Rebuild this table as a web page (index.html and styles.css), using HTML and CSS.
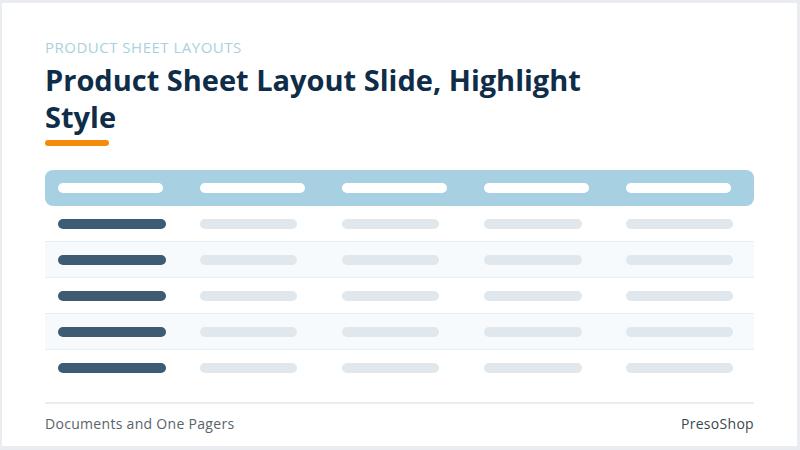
FILE: index.html
```html
<!DOCTYPE html>
<html>
<head>
<meta charset="utf-8">
<link rel="stylesheet" href="styles.css">
</head>
<body>
<div class="slide">
  <div class="eyebrow">PRODUCT SHEET LAYOUTS</div>
  <h1 class="title">Product Sheet Layout Slide, Highlight Style</h1>
  <div class="accent"></div>
  <div class="table">
    <div class="row head">
      <div class="cell"><span class="pill white w105"></span></div>
      <div class="cell"><span class="pill white w105"></span></div>
      <div class="cell"><span class="pill white w105"></span></div>
      <div class="cell"><span class="pill white w105"></span></div>
      <div class="cell"><span class="pill white w105"></span></div>
    </div>
    <div class="row">
      <div class="cell"><span class="pill dark"></span></div>
      <div class="cell"><span class="pill light w97"></span></div>
      <div class="cell"><span class="pill light w97"></span></div>
      <div class="cell"><span class="pill light w98"></span></div>
      <div class="cell"><span class="pill light w107"></span></div>
    </div>
    <div class="row alt">
      <div class="cell"><span class="pill dark"></span></div>
      <div class="cell"><span class="pill light w97"></span></div>
      <div class="cell"><span class="pill light w97"></span></div>
      <div class="cell"><span class="pill light w98"></span></div>
      <div class="cell"><span class="pill light w107"></span></div>
    </div>
    <div class="row">
      <div class="cell"><span class="pill dark"></span></div>
      <div class="cell"><span class="pill light w97"></span></div>
      <div class="cell"><span class="pill light w97"></span></div>
      <div class="cell"><span class="pill light w98"></span></div>
      <div class="cell"><span class="pill light w107"></span></div>
    </div>
    <div class="row alt">
      <div class="cell"><span class="pill dark"></span></div>
      <div class="cell"><span class="pill light w97"></span></div>
      <div class="cell"><span class="pill light w97"></span></div>
      <div class="cell"><span class="pill light w98"></span></div>
      <div class="cell"><span class="pill light w107"></span></div>
    </div>
    <div class="row last">
      <div class="cell"><span class="pill dark"></span></div>
      <div class="cell"><span class="pill light w97"></span></div>
      <div class="cell"><span class="pill light w97"></span></div>
      <div class="cell"><span class="pill light w98"></span></div>
      <div class="cell"><span class="pill light w107"></span></div>
    </div>
  </div>
  <div class="footer">
    <span class="foot-left">Documents and One Pagers</span>
    <span class="foot-right">PresoShop</span>
  </div>
</div>
</body>
</html>
```
FILE: styles.css
```css
html, body {
  margin: 0;
  padding: 0;
}
body {
  width: 800px;
  height: 450px;
  background: #e9edf1;
  font-family: "Open Sans", "Liberation Sans", sans-serif;
  overflow: hidden;
}
.slide {
  box-sizing: border-box;
  margin: 3px 3px 0 2px;
  width: 795px;
  height: 443px;
  background: #ffffff;
  padding: 34px 43px 0 43px;
  display: flex;
  flex-direction: column;
}
.eyebrow {
  font-size: 15px;
  line-height: 20px;
  color: #a9d1e0;
  letter-spacing: 0.5px;
}
.title {
  margin: 4px 0 0 0;
  max-width: 560px;
  font-size: 29px;
  line-height: 37px;
  font-weight: 700;
  color: #0f2d48;
  letter-spacing: 0;
}
.accent {
  margin-top: 5px;
  width: 64px;
  height: 6px;
  border-radius: 3px;
  background: #f68b0b;
}
.table {
  margin-top: 24px;
  display: flex;
  flex-direction: column;
}
.row {
  display: grid;
  grid-template-columns: repeat(5, 142px);
  height: 36px;
  align-items: center;
  border-bottom: 1px solid #e8eef2;
  box-sizing: border-box;
}
.row.head {
  background: #a7d1e3;
  border-radius: 8px;
  border-bottom: none;
}
.row.alt {
  background: #f6fafc;
}
.row.last {
  border-bottom: none;
}
.cell {
  padding-left: 13px;
  display: flex;
  align-items: center;
}
.pill {
  display: block;
  height: 10px;
  border-radius: 5px;
}
.pill.white { background: #ffffff; }
.pill.dark { background: #3e5b74; width: 108px; }
.pill.light { background: #e0e7ed; }
.w105 { width: 105px; }
.w97 { width: 97px; }
.w98 { width: 98px; }
.w107 { width: 107px; }
.footer {
  margin-top: 16px;
  border-top: 2px solid #e8edf1;
  display: flex;
  justify-content: space-between;
  align-items: center;
  padding-top: 10px;
  font-size: 14px;
  line-height: 20px;
}
.foot-left {
  color: #59636c;
  letter-spacing: 0.3px;
}
.foot-right {
  color: #3b4751;
  font-weight: 500;
  letter-spacing: 0.3px;
}
```
